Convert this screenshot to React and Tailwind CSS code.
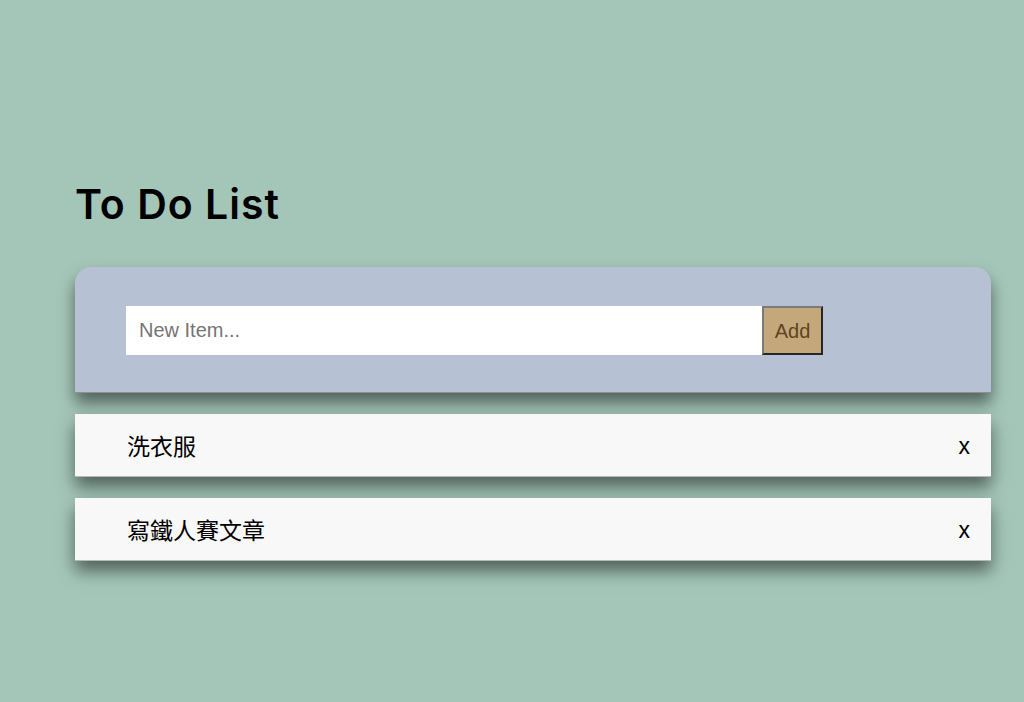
export default function App() {
  const items = ["洗衣服", "寫鐵人賽文章"];
  return (
    <div
      className="min-h-[702px] w-full bg-[#a4c6b8] pt-[176px] pl-[75px] pr-[33px]"
      style={{ fontFamily: '"Liberation Sans", Arial, "Noto Sans CJK TC", sans-serif' }}
    >
      <h1
        className="text-[41px] font-semibold leading-[56px] text-black tracking-[1px]"
        style={{ fontFamily: 'Inter, "Liberation Sans", sans-serif' }}
      >
        To Do List
      </h1>
      <div className="mt-[35px] h-[126px] rounded-t-[16px] bg-[#b6c1d3] pl-[51px] pt-[39px] shadow-[0_10px_16px_rgba(0,0,0,0.5)] border-b border-[#8a8f98]">
        <div className="flex">
          <input
            type="text"
            placeholder="New Item..."
            className="h-[49px] w-[636px] bg-white pl-[13px] text-[20px] text-black outline-none placeholder:text-[#757575]"
            style={{ fontFamily: '"Liberation Sans", Arial, sans-serif' }}
          />
          <button
            className="h-[49px] w-[61px] bg-[#c4a87c] text-[20px] text-[#5f4520] border-2 border-t-[#7b7b7b] border-l-[#7b7b7b] border-b-[#262626] border-r-[#262626]"
            style={{ fontFamily: '"Liberation Sans", Arial, sans-serif' }}
          >
            Add
          </button>
        </div>
      </div>
      <div className="mt-[21px] flex flex-col gap-[21px]">
        {items.map((t) => (
          <div
            key={t}
            className="flex h-[63px] items-center justify-between bg-[#f8f8f8] pl-[52px] pr-[21px] shadow-[0_10px_16px_rgba(0,0,0,0.5)] border-b border-[#b8b8b8]"
          >
            <span className="text-[23px] text-black" style={{ fontFamily: '"Noto Sans CJK TC", sans-serif' }}>{t}</span>
            <span className="text-[23px] text-black leading-none pt-[3px]">x</span>
          </div>
        ))}
      </div>
    </div>
  );
}
